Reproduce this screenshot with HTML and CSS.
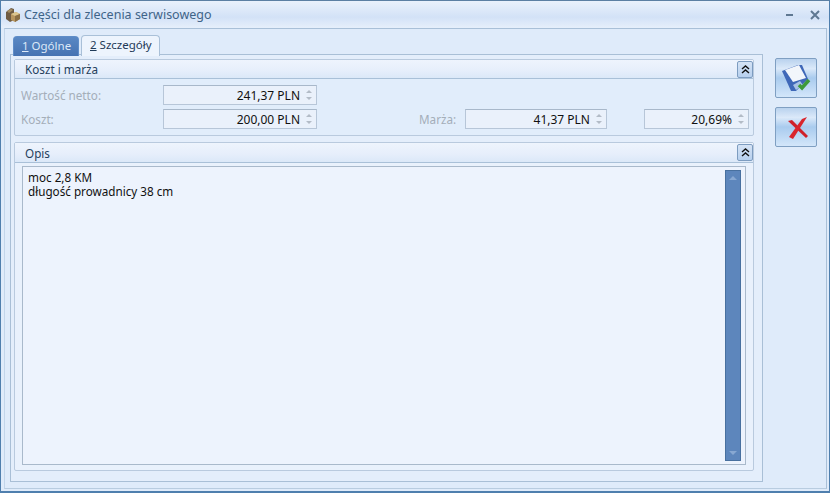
FILE: index.html
```html
<!DOCTYPE html>
<html>
<head>
    <meta charset="UTF-8">
    <title>Części dla zlecenia serwisowego</title>
    <link rel="stylesheet" href="styles.css">
</head>
<body>
    <div class="window">
        <div class="titlebar">
            <svg class="app-icon" width="16" height="16" viewBox="0 0 16 16">
                <path d="M1 5 L6 1 L9 2 L9 13 L5 15 L1 12 Z" fill="#6f5c44"/>
                <path d="M6 7 L11 5 L15 7 L15 12 L10 15 L6 13 Z" fill="#b8965f"/>
                <path d="M6 7 L11 5 L15 7 L10 9 Z" fill="#dcc68f"/>
                <path d="M10 9 L15 7 L15 12 L10 15 Z" fill="#8a6f45"/>
                <path d="M2 4 L6 2 L8 3 L4 6 Z" fill="#a58d63"/>
            </svg>
            <span class="title">Części dla zlecenia serwisowego</span>
            <span class="win-min"></span>
            <svg class="win-close" width="10" height="10" viewBox="0 0 10 10">
                <path d="M1 1 L9 9 M9 1 L1 9" stroke="#5f7892" stroke-width="2" fill="none"/>
            </svg>
        </div>

        <div class="client">
            <div class="main">
                <div class="tabs">
                    <div class="tab tab-active"><u>1</u> Ogólne</div>
                    <div class="tab"><u>2</u> Szczegóły</div>
                </div>

                <div class="page">
                    <div class="group group-cost">
                        <div class="group-header">
                            <span>Koszt i marża</span>
                            <button class="collapse">
                                <svg width="9" height="9" viewBox="0 0 9 9"><path d="M1 4 L4.5 1 L8 4 M1 8 L4.5 5 L8 8" stroke="#111" stroke-width="1.4" fill="none"/></svg>
                            </button>
                        </div>
                        <div class="form">
                            <div class="form-row">
                                <label class="label-first">Wartość netto:</label>
                                <div class="field field-main"><span>241,37 PLN</span><i class="spin"><b class="up"></b><b class="down"></b></i></div>
                            </div>
                            <div class="form-row">
                                <label class="label-first">Koszt:</label>
                                <div class="field field-main"><span>200,00 PLN</span><i class="spin"><b class="up"></b><b class="down"></b></i></div>
                                <label class="label-margin">Marża:</label>
                                <div class="field field-margin"><span>41,37 PLN</span><i class="spin"><b class="up"></b><b class="down"></b></i></div>
                                <div class="field field-percent"><span>20,69%</span><i class="spin"><b class="up"></b><b class="down"></b></i></div>
                            </div>
                        </div>
                    </div>

                    <div class="group group-desc">
                        <div class="group-header">
                            <span>Opis</span>
                            <button class="collapse">
                                <svg width="9" height="9" viewBox="0 0 9 9"><path d="M1 4 L4.5 1 L8 4 M1 8 L4.5 5 L8 8" stroke="#111" stroke-width="1.4" fill="none"/></svg>
                            </button>
                        </div>
                        <div class="memo">
                            <div class="memo-text">moc 2,8 KM<br>długość prowadnicy 38 cm</div>
                            <div class="scrollbar"><b class="sb-up"></b><b class="sb-down"></b></div>
                        </div>
                    </div>
                </div>
            </div>

            <div class="actions">
                <button class="action">
                    <svg width="40" height="38" viewBox="0 0 40 38">
                        <path d="M6 12 L22 6 L26 6 L32 20 L20 32 L15 32 Z" fill="#3f68b8"/>
                        <path d="M9 11 L23 6 L30 19 L17 23 Z" fill="#f2f6fb"/>
                        <path d="M17 26 L24 22 L27 26 L20 31 Z" fill="#a9c2e6"/>
                        <path d="M23 26 L26 29 L33 21" stroke="#3d9a3a" stroke-width="3.5" fill="none"/>
                    </svg>
                </button>
                <button class="action">
                    <svg width="40" height="38" viewBox="0 0 40 38">
                        <path d="M12 13 L16 12 L32 28 L30 30 Z" fill="#cf2029"/>
                        <path d="M13 29 L26 11 L31 9 L17 31 Z" fill="#d9252d"/>
                    </svg>
                </button>
            </div>
        </div>
    </div>
</body>
</html>
```

FILE: styles.css
```css
* {
    box-sizing: border-box;
}

html, body {
    margin: 0;
    padding: 0;
}

body {
    width: 830px;
    height: 493px;
    overflow: hidden;
    font-family: "Noto Sans", sans-serif;
    font-size: 11.7px;
    color: #1b1b1b;
}

.window {
    width: 830px;
    height: 493px;
    display: flex;
    flex-direction: column;
    padding: 0 2px 2px 3px;
    background: #dfebfa;
    border-top: 1px solid #5b7fa3;
    border-left: 1px solid #4f7fae;
    border-right: 1px solid #4f7fae;
    border-bottom: 2px solid #4f7fae;
}

.titlebar {
    height: 27px;
    flex: none;
    display: flex;
    align-items: center;
    margin: 0 -2px 0 -3px;
    padding: 0 9px 0 4px;
    background: linear-gradient(#e9f1fc, #d3e2f7 60%, #e6effb);
}

.app-icon {
    margin-right: 3px;
}

.title {
    flex: 1;
    font-size: 12.5px;
    color: #3f6488;
}

.win-min {
    width: 7px;
    height: 2px;
    margin-right: 17px;
    background: #5f7892;
}

.client {
    flex: 1;
    display: flex;
    border-top: 1px solid #a9c0d8;
    border-left: 1px solid #c2d5ea;
    border-right: 1px solid #a9c0d8;
    border-bottom: 1px solid #b8cce0;
    background: #dfebfa;
    padding: 6px 0 6px 5px;
}

.main {
    width: 753px;
    display: flex;
    flex-direction: column;
}

.tabs {
    display: flex;
    height: 20px;
    padding-left: 3px;
    gap: 2px;
    margin-bottom: -1px;
    position: relative;
}

.tab {
    width: 79px;
    height: 21px;
    padding: 1px 0 0 8px;
    font-size: 11.5px;
    color: #1f3a58;
    background: #edf4fd;
    border: 1px solid #a9c0d8;
    border-bottom: none;
    border-radius: 4px 4px 0 0;
}

.tab-active {
    width: 66px;
    height: 20px;
    margin-top: 1px;
    color: #dce9f8;
    background: linear-gradient(#5a88c4, #4673b2);
    border-color: #5f8dc8;
}

.page {
    flex: 1;
    padding: 4px 8px 10px 3px;
    background: #e4eefb;
    border: 1px solid #a9bfd6;
    display: flex;
    flex-direction: column;
    gap: 6px;
}

.group {
    border: 1px solid #b9cade;
    border-radius: 2px;
    background: #e1edfb;
}

.group-cost {
    height: 77px;
}

.group-desc {
    flex: 1;
    display: flex;
    flex-direction: column;
    background: #e9f1fc;
}

.group-header {
    height: 19px;
    flex: none;
    display: flex;
    align-items: center;
    justify-content: space-between;
    padding-left: 10px;
    color: #253f5c;
    background: linear-gradient(#eef4fd, #e6eefb 60%, #dbe8f8);
    border-bottom: 1px solid #a9c0d8;
}

.group-desc .group-header {
    height: 20px;
}

.collapse {
    width: 16px;
    height: 17px;
    padding: 0;
    display: flex;
    align-items: center;
    justify-content: center;
    background: linear-gradient(#d5e3f5, #b7d0ee);
    border: 1px solid #7d9cc0;
    border-radius: 2px;
}

.form {
    padding: 6px 0 0 6px;
    display: flex;
    flex-direction: column;
    gap: 4px;
}

.form-row {
    display: flex;
    height: 20px;
    align-items: center;
}

label {
    color: #a4aeb9;
}

.label-first {
    width: 142px;
}

.label-margin {
    width: 46px;
    margin-left: 102px;
}

.field {
    height: 20px;
    display: flex;
    align-items: center;
    justify-content: flex-end;
    padding-right: 3px;
    font-size: 12px;
    color: #111;
    background: #eaf1fb;
    border: 1px solid #b7c6d8;
    border-top-color: #a8b8ca;
}

.field-main {
    width: 154px;
}

.field-margin {
    width: 142px;
}

.field-percent {
    width: 105px;
    margin-left: 37px;
}

.spin {
    width: 9px;
    margin-left: 4px;
    display: flex;
    flex-direction: column;
    gap: 4px;
    align-items: center;
}

.spin b {
    width: 0;
    height: 0;
    border-left: 3px solid transparent;
    border-right: 3px solid transparent;
}

.spin .up {
    border-bottom: 3px solid #b3bcc7;
}

.spin .down {
    border-top: 3px solid #b3bcc7;
}

.memo {
    flex: 1;
    margin: 3px 7px 5px 7px;
    display: flex;
    padding: 3px 4px 3px 3px;
    background: #edf3fd;
    border: 1px solid #a9b9cb;
}

.memo-text {
    flex: 1;
    padding: 0 0 0 2px;
    line-height: 14px;
    color: #111;
}

.scrollbar {
    width: 16px;
    display: flex;
    flex-direction: column;
    justify-content: space-between;
    align-items: center;
    padding: 5px 0;
    background: #5d86bc;
    border: 1px solid #48709f;
}

.sb-up, .sb-down {
    width: 0;
    height: 0;
    border-left: 4px solid transparent;
    border-right: 4px solid transparent;
}

.sb-up {
    border-bottom: 4px solid #88a8d2;
}

.sb-down {
    border-top: 4px solid #88a8d2;
}

.actions {
    padding: 23px 0 0 12px;
    display: flex;
    flex-direction: column;
    gap: 9px;
}

.action {
    width: 42px;
    height: 40px;
    padding: 0;
    display: flex;
    align-items: center;
    justify-content: center;
    background: linear-gradient(#b9d2ee, #dbe9f9 25%, #a9cbee 50%, #d3e6fa);
    border: 1px solid #7f9fc2;
    border-radius: 2px;
}
```
